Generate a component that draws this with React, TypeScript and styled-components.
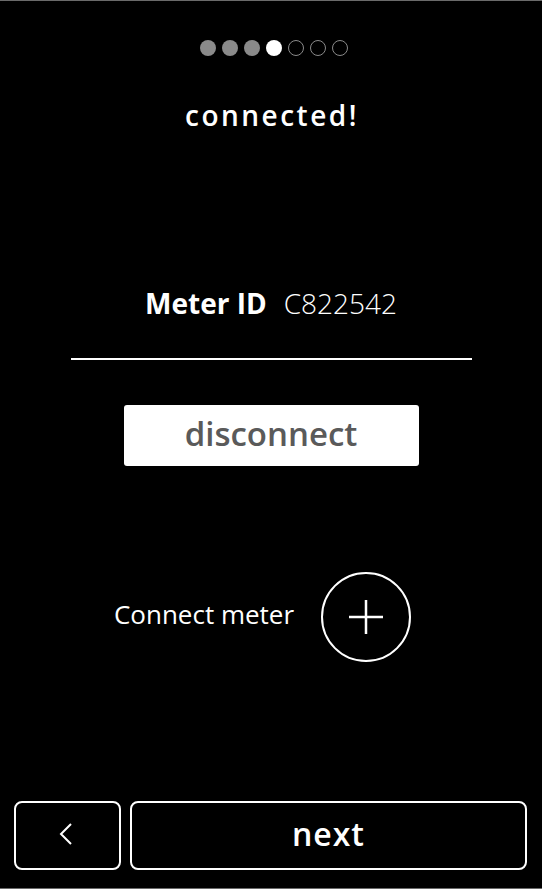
import styled, {createGlobalStyle} from "styled-components";

const GlobalStyle = createGlobalStyle`
  html, body {
    margin: 0;
    padding: 0;
    background: #000;
  }
  * {
    box-sizing: border-box;
  }
`;

const Screen = styled.div`
  width: 542px;
  height: 889px;
  background: #000;
  border-top: 1px solid #6a6a6a;
  border-bottom: 1px solid #6a6a6a;
  display: flex;
  flex-direction: column;
  align-items: center;
  font-family: "Open Sans", "Noto Sans", sans-serif;
  color: #fff;
`;

const Steps = styled.div`
  display: flex;
  gap: 6px;
  margin-top: 39px;
  margin-left: 5px;
`;

const Dot = styled.div<{ $state: "done" | "current" | "todo" }>`
  width: 16px;
  height: 16px;
  border-radius: 50%;
  background: ${p => p.$state === "done" ? "#8a8a8a" : p.$state === "current" ? "#fff" : "transparent"};
  border: ${p => p.$state === "todo" ? "1.5px solid #8a8a8a" : "none"};
`;

const Title = styled.h1`
  margin: 41px 0 0 2px;
  font-size: 28px;
  font-weight: 600;
  letter-spacing: 2.5px;
  line-height: 36px;
`;

const MeterRow = styled.div`
  margin-top: 152px;
  display: flex;
  align-items: baseline;
  gap: 17px;
  font-size: 28px;
  line-height: 36px;
`;

const MeterLabel = styled.span`
  font-weight: 700;
`;

const MeterValue = styled.span`
  font-weight: 300;
`;

const Divider = styled.div`
  margin-top: 37px;
  width: 401px;
  height: 2px;
  background: #fff;
`;

const DisconnectButton = styled.button`
  margin-top: 45px;
  width: 295px;
  height: 61px;
  border: none;
  border-radius: 3px;
  background: #fff;
  color: #5a5a5a;
  font-family: inherit;
  font-size: 33px;
  font-weight: 600;
  padding: 0 0 4px;
`;

const ConnectRow = styled.div`
  margin-top: 106px;
  display: flex;
  align-items: center;
  gap: 27px;
  margin-left: -17px;
`;

const ConnectLabel = styled.span`
  font-size: 26px;
  margin-top: -6px;
`;

const AddButton = styled.button`
  width: 90px;
  height: 90px;
  border-radius: 50%;
  border: 2px solid #fff;
  background: transparent;
  display: flex;
  align-items: center;
  justify-content: center;
  padding: 0;
`;

const Footer = styled.div`
  margin-top: auto;
  margin-bottom: 18px;
  width: 100%;
  padding: 0 15px 0 14px;
  display: flex;
  gap: 9px;
`;

const NavButton = styled.button<{ $grow?: boolean }>`
  height: 69px;
  flex: ${p => p.$grow ? 1 : "0 0 107px"};
  border: 2px solid #fff;
  border-radius: 8px;
  background: #000;
  color: #fff;
  font-family: inherit;
  font-size: 32px;
  font-weight: 600;
  letter-spacing: 1px;
  display: flex;
  align-items: center;
  justify-content: center;
  padding: ${p => p.$grow ? "0 0 4px" : "0 4px 4px 0"};
`;

const steps: ("done" | "current" | "todo")[] = ["done", "done", "done", "current", "todo", "todo", "todo"];

export default function App() {
  return (
    <>
      <GlobalStyle/>
      <Screen>
        <Steps>
          {steps.map((s, i) => <Dot key={i} $state={s}/>)}
        </Steps>
        <Title>connected!</Title>
        <MeterRow>
          <MeterLabel>Meter ID</MeterLabel>
          <MeterValue>C822542</MeterValue>
        </MeterRow>
        <Divider/>
        <DisconnectButton>disconnect</DisconnectButton>
        <ConnectRow>
          <ConnectLabel>Connect meter</ConnectLabel>
          <AddButton aria-label="connect meter">
            <svg width="34" height="34" viewBox="0 0 34 34">
              <path d="M17 0V34M0 17H34" stroke="#fff" strokeWidth="2.5"/>
            </svg>
          </AddButton>
        </ConnectRow>
        <Footer>
          <NavButton aria-label="back">
            <svg width="14" height="24" viewBox="0 0 14 24">
              <path d="M12 2L2 12L12 22" stroke="#fff" strokeWidth="2" fill="none"/>
            </svg>
          </NavButton>
          <NavButton $grow>next</NavButton>
        </Footer>
      </Screen>
    </>
  );
}
